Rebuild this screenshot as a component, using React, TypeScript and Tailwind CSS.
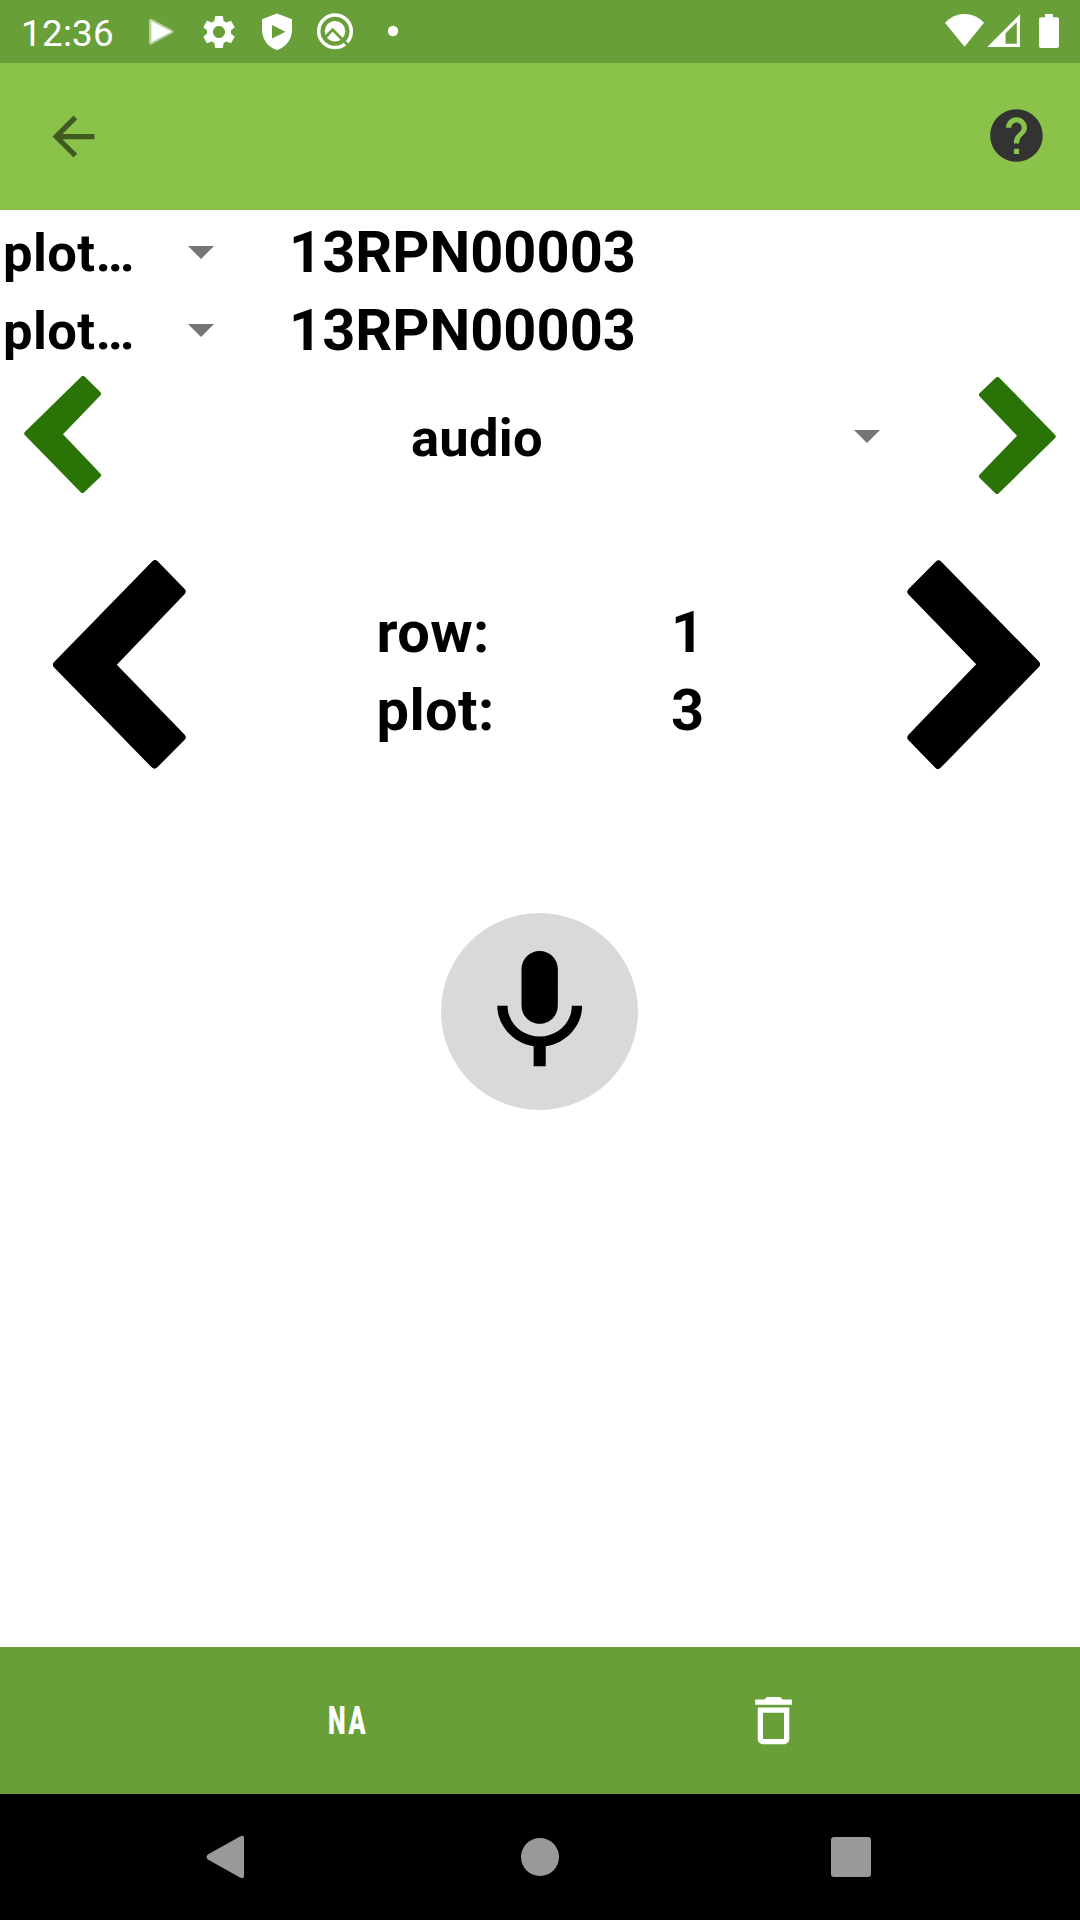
import React from "react";

function StatusBar() {
  return (
    <header className="flex h-[63px] bg-[#689f38] text-white">
      <span className="ml-[21px] w-[118px] text-[36.75px] leading-[67px] tracking-[0.3px]">12:36</span>
      <svg className="h-[63px] w-[40px] fill-white" viewBox="139 0 40 63">
        <path d="M149 20.5Q149 18 152 19L172 29.8Q174.5 31.7 172 33.3L152 44.3Q149 45.500 149 43Z" opacity=".5" />
        <path d="M151.300 21L171.500 31.700L151.300 42.300Z" />
      </svg>
      <svg className="ml-5 mt-[11.500px] size-[40px] fill-white" viewBox="0 0 24 24">
        <path d="M19.14 12.94c.04-.3.06-.61.06-.94 0-.32-.02-.64-.07-.94l2.03-1.58c.18-.14.23-.41.12-.61l-1.92-3.32c-.12-.22-.37-.29-.59-.22l-2.39.96c-.5-.38-1.03-.7-1.62-.94l-.36-2.54c-.04-.24-.24-.41-.48-.41h-3.84c-.24 0-.43.17-.47.41l-.36 2.54c-.59.24-1.13.57-1.62.94l-2.39-.96c-.22-.08-.47 0-.59.22L2.740 8.870c-.12.21-.08.47.12.61l2.030 1.580c-.05.3-.09.63-.09.94s.02.64.07.94l-2.030 1.580c-.18.14-.23.41-.12.61l1.920 3.320c.12.22.37.29.59.22l2.390-.96c.5.38 1.030.7 1.620.94l.36 2.540c.05.24.24.41.48.41h3.840c.24 0 .44-.17.47-.41l.36-2.540c.59-.24 1.130-.56 1.620-.94l2.390.96c.22.08.47 0 .59-.22l1.920-3.320c.12-.22.07-.47-.12-.61l-2.010-1.580zM12 15.600c-1.980 0-3.600-1.620-3.600-3.600s1.620-3.600 3.600-3.600 3.600 1.620 3.600 3.600-1.620 3.600-3.600 3.600z" />
      </svg>
      <svg className="ml-[18px] h-[63px] w-[40px] fill-white" viewBox="257 0 40 63">
        <path fillRule="evenodd" d="M277 13.500L292 19.200V30C292 39 286 47.500 277 50C268 47.500 262 39 262 30V19.200ZM272 25V38.500L285.500 31.700Z" />
      </svg>
      <svg className="ml-[18px] h-[63px] w-[40px]" viewBox="315 0 40 63">
        <circle cx="335" cy="31.300" r="16.300" fill="none" stroke="white" strokeWidth="3.500" />
        <circle cx="335" cy="31.300" r="10.300" fill="white" />
        <path d="M325.500 37L332.700 29.700L349.500 46.500" fill="none" stroke="#689f38" strokeWidth="2.800" />
      </svg>
      <svg className="ml-[28px] h-[63px] w-5 fill-white" viewBox="383 0 20 63">
        <circle cx="393" cy="31" r="5.200" />
      </svg>
      <svg className="ml-auto h-[63px] w-[80px] fill-white" viewBox="943 0 80 63">
        <path d="M945 22.800Q953 14 964.500 14T984 22.800L964.500 46.800Z" />
        <path fillRule="evenodd" d="M987.200 47L1020 14.300V47ZM1005.500 33.300V43.700H1016.800V22.300Z" />
      </svg>
      <svg className="mr-[14px] h-[63px] w-[43px] fill-white" viewBox="1023 0 43 63">
        <path d="M1045 14H1053V17.300H1057Q1059 17.300 1059 19.300V46Q1059 48 1057 48H1041Q1039 48 1039 46V19.300Q1039 17.300 1041 17.300H1045Z" />
      </svg>
    </header>
  );
}

function Toolbar() {
  return (
    <div className="flex h-[147px] items-center justify-between bg-[#8bc34a] pl-[42px] pr-8">
      <svg className="size-[63px] fill-[#405a22]" viewBox="0 0 24 24">
        <path d="M20,11H7.830l5.590,-5.590L12,4l-8,8 8,8 1.410,-1.410L7.830,13H20v-2z" />
      </svg>
      <svg className="mb-0.5 size-[63px] fill-[#333333]" viewBox="0 0 24 24">
        <path d="M12 2C6.480 2 2 6.480 2 12s4.480 10 10 10 10-4.480 10-10S17.520 2 12 2zm1 17h-2v-2h2v2zm2.070-7.750l-.9.92C13.450 12.900 13 13.500 13 15h-2v-.5c0-1.100.45-2.100 1.170-2.830l1.240-1.260c.37-.36.59-.86.59-1.410 0-1.100-.9-2-2-2s-2 .9-2 2H8c0-2.210 1.790-4 4-4s4 1.790 4 4c0 .88-.36 1.680-.93 2.250z" />
      </svg>
    </div>
  );
}

function Caret({ className = "" }: { className?: string }) {
  return (
    <svg className={"h-[13px] w-[26px] shrink-0 fill-[#757575] " + className} viewBox="0 0 26 13">
      <path d="M0 0H26L13 13Z" />
    </svg>
  );
}

function InfoRow() {
  return (
    <div className="flex h-[78px] items-start">
      <span className="w-[187.500px] pl-[3px] text-[52.500px] font-bold leading-[87px] tracking-[0.4px]">plot…</span>
      <Caret className="mt-9" />
      <span className="ml-[75.500px] text-[57.750px] font-bold leading-[84px]">13RPN00003</span>
    </div>
  );
}

function TraitArrow({ className = "" }: { className?: string }) {
  return (
    <svg className={"h-[117px] w-[77px] " + className} viewBox="0 0 77 117">
      <path d="M2.800 57.600L59 2.500L74.500 17.800L35.500 58.300L74.500 99.300L58.500 114.500Z" fill="#2a7306" stroke="#2a7306" strokeWidth="5" strokeLinejoin="round" />
    </svg>
  );
}

function PlotArrow({ className = "" }: { className?: string }) {
  return (
    <svg className={"h-[209px] w-[133px] " + className} viewBox="0 0 133 209">
      <path d="M4 104.700L102 4.200L128.600 31.500L58.300 104.700L128.600 177.300L101.500 204.500Z" fill="black" stroke="black" strokeWidth="8" strokeLinejoin="round" />
    </svg>
  );
}

function Position({ label, value }: { label: string; value: string }) {
  return (
    <div className="flex h-[78px] text-[57.750px] font-bold leading-[78px]">
      <span className="w-[294.500px] tracking-[0.4px]">{label}</span>
      <span>{value}</span>
    </div>
  );
}

export default function App() {
  return (
    <div className="flex h-[1920px] w-[1080px] flex-col bg-white font-['Roboto',sans-serif] text-black">
      <StatusBar />
      <Toolbar />
      <main className="flex flex-1 flex-col">
        <InfoRow />
        <InfoRow />
        <section className="mt-[9.500px] flex h-[120px] items-start pl-6">
          <TraitArrow />
          <span className="ml-[310px] w-[442.500px] text-[52.500px] font-bold leading-[124px] tracking-[0.25px]">audio</span>
          <Caret className="mt-[54.500px]" />
          <TraitArrow className="ml-[99px] mt-[1.500px] rotate-180" />
        </section>
        <section className="mt-[64.500px] flex h-[209px] items-start pl-[53px]">
          <PlotArrow />
          <div className="ml-[190.500px] mt-[33px] w-[530px]">
            <Position label="row:" value="1" />
            <Position label="plot:" value="3" />
          </div>
          <PlotArrow className="rotate-180" />
        </section>
        <div className="ml-[441px] mt-36 flex size-[197px] items-center justify-center rounded-full bg-[#d9d9d9]">
          <svg className="size-[145.400px]" viewBox="0 0 24 24">
            <path d="M12,14c1.660,0 2.990,-1.340 2.990,-3L15,5c0,-1.660 -1.340,-3 -3,-3S9,3.340 9,5v6c0,1.660 1.340,3 3,3zM17.300,11c0,3 -2.540,5.100 -5.300,5.100S6.700,14 6.700,11L5,11c0,3.410 2.720,6.230 6,6.720L11,21h2v-3.280c3.280,-0.480 6,-3.300 6,-6.720h-1.700z" />
          </svg>
        </div>
      </main>
      <footer className="flex h-[147px] items-center bg-[#689f38] text-white">
        <span className="ml-[327.500px] w-[414.500px] origin-left scale-x-[0.66] pt-0.5 text-[38px] font-black leading-[63px] tracking-[4px]">NA</span>
        <svg className="size-[63px] fill-white" viewBox="0 0 24 24">
          <path d="M6,19c0,1.100 .9,2 2,2h8c1.100,0 2,-.9 2,-2V7H6v12zM8,9h8v10H8V9zM15.500,4l-1,-1h-5l-1,1H5v2h14V4z" />
        </svg>
      </footer>
      <nav className="flex h-[126px] items-center bg-black fill-[#999999]">
        <svg className="ml-[206px] h-11 w-[39px]" viewBox="0 0 39 44">
          <path d="M1.800 19.600L34 1.500Q38 -.3 38 3V41Q38 44.300 34 42.500L1.800 24.400Q-.7 22 1.800 19.600Z" />
        </svg>
        <div className="ml-[276px] size-[38px] rounded-full bg-[#999999]" />
        <div className="ml-[272px] size-10 rounded-[3px] bg-[#999999]" />
      </nav>
    </div>
  );
}
